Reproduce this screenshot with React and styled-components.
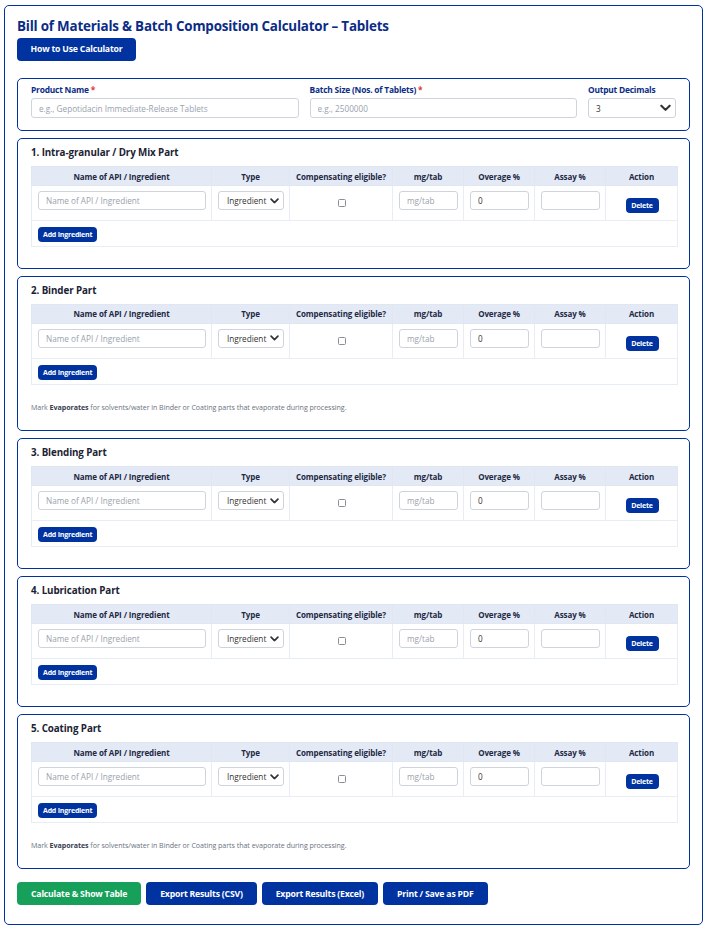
import React from "react";
import styled, { createGlobalStyle } from "styled-components";

const Global = createGlobalStyle`
  html, body { margin: 0; padding: 0; background: #ffffff; }
  body { font-family: "Open Sans", "Noto Sans", sans-serif; }
  * { box-sizing: border-box; }
`;

const NAVY = "#0033a0";

const Page = styled.div`
  margin: 5px 5px 6px 4px;
  border: 1px solid ${NAVY};
  border-radius: 5px;
  padding: 10px 12px 18.5px 12px;
`;

const Title = styled.h1`
  margin: 0;
  font-size: 13.4px;
  line-height: 20px;
  font-weight: 700;
  color: #0b2c86;
  letter-spacing: -0.2px;
`;

const Button = styled.button`
  display: block;
  background: ${(p) => (p.$green ? "#17a05a" : NAVY)};
  color: #fff;
  border: none;
  border-radius: 4px;
  font-family: inherit;
  font-weight: 700;
  font-size: ${(p) => (p.$small ? "7px" : "8.7px")};
  line-height: 1;
  height: ${(p) => (p.$small ? "15px" : "23px")};
  padding: ${(p) => (p.$small ? "0 5px" : "0 14px")};
  letter-spacing: -0.2px;
  cursor: pointer;
  white-space: nowrap;
`;

const HelpButton = styled(Button)`
  margin-top: 2px;
  width: 119px;
  padding: 0;
`;

const Card = styled.div`
  border: 1px solid ${NAVY};
  border-radius: 5px;
  padding: ${(p) => p.$pad || "6px 13px 9.9px 13px"};
  margin-top: ${(p) => p.$mt || "7px"};
`;

const FieldGrid = styled.div`
  display: grid;
  grid-template-columns: 1fr 1fr 88px;
  column-gap: 11px;
`;

const Field = styled.label`
  display: flex;
  flex-direction: column;
  gap: 2px;
`;

const Label = styled.span`
  font-size: 8.4px;
  line-height: 12px;
  font-weight: 700;
  color: #0b2c86;
  letter-spacing: -0.2px;
  b { color: #e53935; font-weight: 700; }
`;

const TextInput = styled.input`
  display: block;
  width: 100%;
  height: ${(p) => (p.$h ? p.$h : "20px")};
  border: 1px solid #cdd4de;
  border-radius: 3px;
  padding: 0 7px;
  font-family: inherit;
  font-size: 8.2px;
  color: #333;
  background: #fff;
  outline: none;
  &::placeholder { color: #9aa2ad; }
`;

const SelectWrap = styled.div`
  position: relative;
  width: 100%;
`;

const Select = styled.select`
  appearance: none;
  -webkit-appearance: none;
  display: block;
  width: 100%;
  height: ${(p) => p.$h || "20px"};
  border: 1px solid #cdd4de;
  border-radius: 3px;
  padding: ${(p) => p.$pad || "0 7px"};
  font-family: inherit;
  font-size: 8.2px;
  color: #333;
  background: #fff;
  outline: none;
`;

const Chevron = styled.svg`
  position: absolute;
  right: ${(p) => p.$r || "5px"};
  top: 50%;
  transform: translateY(-50%);
  pointer-events: none;
`;

const SectionTitle = styled.h2`
  margin: 0 0 6px 0;
  font-size: 9.8px;
  line-height: 15px;
  font-weight: 700;
  color: #1b2233;
  letter-spacing: -0.1px;
`;

const Table = styled.table`
  width: 100%;
  border-collapse: collapse;
  table-layout: fixed;
  margin-bottom: 11px;
`;

const Th = styled.th`
  background: #e3e9f5;
  border: 1px solid #e0e7f3;
  height: 19px;
  padding: 0 3px;
  font-size: 8px;
  line-height: 9px;
  font-weight: 700;
  color: #1f2a44;
  text-align: center;
  letter-spacing: -0.1px;
  white-space: nowrap;
`;

const Td = styled.td`
  border: 1px solid #e6edf7;
  padding: 5px 5px 0 6px;
  vertical-align: top;
  height: 35px;
  font-size: 0;
  line-height: 0;
`;

const FootTd = styled.td`
  border: 1px solid #e6edf7;
  padding: 6px 6px 0 6px;
  vertical-align: top;
  height: 26px;
  font-size: 0;
  line-height: 0;
`;

const Check = styled.input`
  appearance: none;
  -webkit-appearance: none;
  display: block;
  width: 8px;
  height: 8px;
  margin: 8px auto 0 auto;
  border: 1px solid #8a8f96;
  border-radius: 1.5px;
  background: #fff;
`;

const DeleteBtn = styled(Button)`
  margin: 7px auto 0 auto;
  width: 33px;
  padding: 0;
`;

const Note = styled.p`
  margin: 16px 0 7.5px 0;
  font-size: 7.1px;
  line-height: 12px;
  color: #6b7280;
  letter-spacing: -0.05px;
  b { color: #374151; font-weight: 700; }
`;

const Actions = styled.div`
  display: flex;
  gap: 5px;
  margin-top: 13px;
`;

const ChevronIcon = ({ size = 9 }) => (
  <Chevron $r="5px" width={size} height={size * 0.7} viewBox="0 0 10 7">
    <path d="M1.2 1.4 L5 5.2 L8.8 1.4" fill="none" stroke="#333" strokeWidth="1.9" strokeLinecap="round" strokeLinejoin="round" />
  </Chevron>
);

const cols = [180, 78, 103, 71, 71, 71, 72];
const headers = [
  "Name of API / Ingredient",
  "Type",
  "Compensating eligible?",
  "mg/tab",
  "Overage %",
  "Assay %",
  "Action",
];

const sections = [
  { title: "1. Intra-granular / Dry Mix Part", note: false },
  { title: "2. Binder Part", note: true },
  { title: "3. Blending Part", note: false },
  { title: "4. Lubrication Part", note: false },
  { title: "5. Coating Part", note: true },
];

const Section = ({ title, note }) => (
  <Card>
    <SectionTitle>{title}</SectionTitle>
    <Table>
      <colgroup>
        {cols.map((w, i) => (
          <col key={i} style={{ width: w }} />
        ))}
      </colgroup>
      <thead>
        <tr>
          {headers.map((h) => (
            <Th key={h}>{h}</Th>
          ))}
        </tr>
      </thead>
      <tbody>
        <tr>
          <Td>
            <TextInput $h="19px" placeholder="Name of API / Ingredient" />
          </Td>
          <Td>
            <SelectWrap>
              <Select $h="19px" $pad="0 0 0 8px" defaultValue="Ingredient">
                <option>Ingredient</option>
                <option>API</option>
                <option>Evaporates</option>
              </Select>
              <ChevronIcon size={9} />
            </SelectWrap>
          </Td>
          <Td>
            <Check type="checkbox" />
          </Td>
          <Td>
            <TextInput $h="19px" placeholder="mg/tab" />
          </Td>
          <Td>
            <TextInput $h="19px" defaultValue="0" />
          </Td>
          <Td>
            <TextInput $h="19px" />
          </Td>
          <Td>
            <DeleteBtn $small>Delete</DeleteBtn>
          </Td>
        </tr>
        <tr>
          <FootTd colSpan={7}>
            <Button $small>Add Ingredient</Button>
          </FootTd>
        </tr>
      </tbody>
    </Table>
    {note && (
      <Note>
        Mark <b>Evaporates</b> for solvents/water in Binder or Coating parts that evaporate during processing.
      </Note>
    )}
  </Card>
);

export default function App() {
  return (
    <>
      <Global />
      <Page>
        <Title>Bill of Materials &amp; Batch Composition Calculator – Tablets</Title>
        <HelpButton>How to Use Calculator</HelpButton>
        <Card $mt="17px" $pad="5px 13px 12px 13px">
          <FieldGrid>
            <Field>
              <Label>
                Product Name <b>*</b>
              </Label>
              <TextInput placeholder="e.g., Gepotidacin Immediate-Release Tablets" />
            </Field>
            <Field>
              <Label>
                Batch Size (Nos. of Tablets) <b>*</b>
              </Label>
              <TextInput placeholder="e.g., 2500000" />
            </Field>
            <Field>
              <Label>Output Decimals</Label>
              <SelectWrap>
                <Select defaultValue="3">
                  <option>0</option>
                  <option>1</option>
                  <option>2</option>
                  <option>3</option>
                  <option>4</option>
                </Select>
                <ChevronIcon size={11} />
              </SelectWrap>
            </Field>
          </FieldGrid>
        </Card>
        {sections.map((s) => (
          <Section key={s.title} {...s} />
        ))}
        <Actions>
          <Button $green>Calculate &amp; Show Table</Button>
          <Button>Export Results (CSV)</Button>
          <Button>Export Results (Excel)</Button>
          <Button>Print / Save as PDF</Button>
        </Actions>
      </Page>
    </>
  );
}
